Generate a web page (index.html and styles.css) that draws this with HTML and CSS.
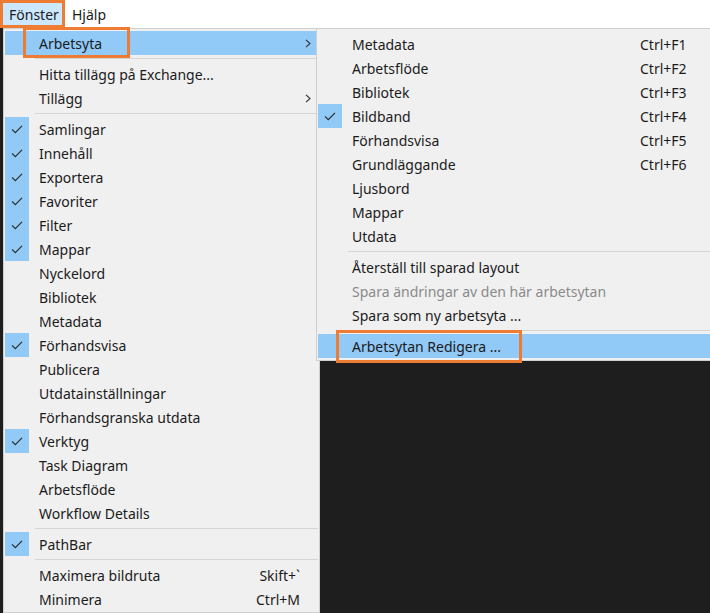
FILE: index.html
```html
<!DOCTYPE html>
<html lang="sv">
<head>
<meta charset="utf-8">
<title>Fönster</title>
<link rel="stylesheet" href="styles.css">
</head>
<body>
<div class="menubar">
  <div class="top-item active">Fönster</div>
  <div class="top-item">Hjälp</div>
</div>
<div class="workspace">
  <div class="strip"></div>
  <div class="menu main">
    <div class="row hl"><span class="chk"></span><span class="lbl"><span class="mark mark-a">Arbetsyta</span></span><span class="sc"></span><span class="arr"><svg width="6" height="9" viewBox="0 0 6 9"><path d="M1 .8 L5 4.5 L1 8.2" fill="none" stroke="#333" stroke-width="1.1"/></svg></span></div>
    <div class="sep"></div>
    <div class="row"><span class="chk"></span><span class="lbl">Hitta tillägg på Exchange...</span><span class="sc"></span><span class="arr"></span></div>
    <div class="row"><span class="chk"></span><span class="lbl">Tillägg</span><span class="sc"></span><span class="arr"><svg width="6" height="9" viewBox="0 0 6 9"><path d="M1 .8 L5 4.5 L1 8.2" fill="none" stroke="#333" stroke-width="1.1"/></svg></span></div>
    <div class="sep"></div>
    <div class="row"><span class="chk on"><svg width="24" height="24" viewBox="0 0 24 24"><path d="M7 12.3 L10.3 15.6 L17 8.9" fill="none" stroke="#2b2b2b" stroke-width="1.2"/></svg></span><span class="lbl">Samlingar</span><span class="sc"></span><span class="arr"></span></div>
    <div class="row"><span class="chk on"><svg width="24" height="24" viewBox="0 0 24 24"><path d="M7 12.3 L10.3 15.6 L17 8.9" fill="none" stroke="#2b2b2b" stroke-width="1.2"/></svg></span><span class="lbl">Innehåll</span><span class="sc"></span><span class="arr"></span></div>
    <div class="row"><span class="chk on"><svg width="24" height="24" viewBox="0 0 24 24"><path d="M7 12.3 L10.3 15.6 L17 8.9" fill="none" stroke="#2b2b2b" stroke-width="1.2"/></svg></span><span class="lbl">Exportera</span><span class="sc"></span><span class="arr"></span></div>
    <div class="row"><span class="chk on"><svg width="24" height="24" viewBox="0 0 24 24"><path d="M7 12.3 L10.3 15.6 L17 8.9" fill="none" stroke="#2b2b2b" stroke-width="1.2"/></svg></span><span class="lbl">Favoriter</span><span class="sc"></span><span class="arr"></span></div>
    <div class="row"><span class="chk on"><svg width="24" height="24" viewBox="0 0 24 24"><path d="M7 12.3 L10.3 15.6 L17 8.9" fill="none" stroke="#2b2b2b" stroke-width="1.2"/></svg></span><span class="lbl">Filter</span><span class="sc"></span><span class="arr"></span></div>
    <div class="row"><span class="chk on"><svg width="24" height="24" viewBox="0 0 24 24"><path d="M7 12.3 L10.3 15.6 L17 8.9" fill="none" stroke="#2b2b2b" stroke-width="1.2"/></svg></span><span class="lbl">Mappar</span><span class="sc"></span><span class="arr"></span></div>
    <div class="row"><span class="chk"></span><span class="lbl">Nyckelord</span><span class="sc"></span><span class="arr"></span></div>
    <div class="row"><span class="chk"></span><span class="lbl">Bibliotek</span><span class="sc"></span><span class="arr"></span></div>
    <div class="row"><span class="chk"></span><span class="lbl">Metadata</span><span class="sc"></span><span class="arr"></span></div>
    <div class="row"><span class="chk on"><svg width="24" height="24" viewBox="0 0 24 24"><path d="M7 12.3 L10.3 15.6 L17 8.9" fill="none" stroke="#2b2b2b" stroke-width="1.2"/></svg></span><span class="lbl">Förhandsvisa</span><span class="sc"></span><span class="arr"></span></div>
    <div class="row"><span class="chk"></span><span class="lbl">Publicera</span><span class="sc"></span><span class="arr"></span></div>
    <div class="row"><span class="chk"></span><span class="lbl">Utdatainställningar</span><span class="sc"></span><span class="arr"></span></div>
    <div class="row"><span class="chk"></span><span class="lbl">Förhandsgranska utdata</span><span class="sc"></span><span class="arr"></span></div>
    <div class="row"><span class="chk on"><svg width="24" height="24" viewBox="0 0 24 24"><path d="M7 12.3 L10.3 15.6 L17 8.9" fill="none" stroke="#2b2b2b" stroke-width="1.2"/></svg></span><span class="lbl">Verktyg</span><span class="sc"></span><span class="arr"></span></div>
    <div class="row"><span class="chk"></span><span class="lbl">Task Diagram</span><span class="sc"></span><span class="arr"></span></div>
    <div class="row"><span class="chk"></span><span class="lbl">Arbetsflöde</span><span class="sc"></span><span class="arr"></span></div>
    <div class="row"><span class="chk"></span><span class="lbl">Workflow Details</span><span class="sc"></span><span class="arr"></span></div>
    <div class="sep"></div>
    <div class="row"><span class="chk on"><svg width="24" height="24" viewBox="0 0 24 24"><path d="M7 12.3 L10.3 15.6 L17 8.9" fill="none" stroke="#2b2b2b" stroke-width="1.2"/></svg></span><span class="lbl">PathBar</span><span class="sc"></span><span class="arr"></span></div>
    <div class="sep"></div>
    <div class="row"><span class="chk"></span><span class="lbl">Maximera bildruta</span><span class="sc">Skift+`</span><span class="arr"></span></div>
    <div class="row"><span class="chk"></span><span class="lbl">Minimera</span><span class="sc">Ctrl+M</span><span class="arr"></span></div>
  </div>
  <div class="fill"></div>

  <div class="menu sub">
    <div class="row"><span class="chk"></span><span class="lbl">Metadata</span><span class="sc">Ctrl+F1</span></div>
    <div class="row"><span class="chk"></span><span class="lbl">Arbetsflöde</span><span class="sc">Ctrl+F2</span></div>
    <div class="row"><span class="chk"></span><span class="lbl">Bibliotek</span><span class="sc">Ctrl+F3</span></div>
    <div class="row"><span class="chk on"><svg width="24" height="24" viewBox="0 0 24 24"><path d="M7 12.3 L10.3 15.6 L17 8.9" fill="none" stroke="#2b2b2b" stroke-width="1.2"/></svg></span><span class="lbl">Bildband</span><span class="sc">Ctrl+F4</span></div>
    <div class="row"><span class="chk"></span><span class="lbl">Förhandsvisa</span><span class="sc">Ctrl+F5</span></div>
    <div class="row"><span class="chk"></span><span class="lbl">Grundläggande</span><span class="sc">Ctrl+F6</span></div>
    <div class="row"><span class="chk"></span><span class="lbl">Ljusbord</span><span class="sc"></span></div>
    <div class="row"><span class="chk"></span><span class="lbl">Mappar</span><span class="sc"></span></div>
    <div class="row"><span class="chk"></span><span class="lbl">Utdata</span><span class="sc"></span></div>
    <div class="sep"></div>
    <div class="row"><span class="chk"></span><span class="lbl">Återställ till sparad layout</span><span class="sc"></span></div>
    <div class="row disabled"><span class="chk"></span><span class="lbl">Spara ändringar av den här arbetsytan</span><span class="sc"></span></div>
    <div class="row"><span class="chk"></span><span class="lbl">Spara som ny arbetsyta ...</span><span class="sc"></span></div>
    <div class="sep"></div>
    <div class="row hl"><span class="chk"></span><span class="lbl"><span class="mark mark-b">Arbetsytan Redigera ...</span></span><span class="sc"></span></div>
  </div>
</div>
</body>
</html>
```

FILE: styles.css
```css
* { box-sizing: border-box; }
html, body {
  margin: 0;
  padding: 0;
  width: 710px;
  height: 613px;
  overflow: hidden;
  background: #1e1e1e;
  font-family: "Noto Sans", "Open Sans", "DejaVu Sans", sans-serif;
  font-size: 14px;
  color: #1b1b1b;
}
.menubar {
  height: 28px;
  background: #ffffff;
  display: flex;
  align-items: stretch;
}
.top-item {
  display: flex;
  align-items: center;
  padding: 2px 6px 0;
  line-height: 1;
}
.top-item.active {
  width: 65px;
  padding-left: 6px;
  background: #cce8ff;
  border: 3px solid #ee7d33;
}
.top-item + .top-item { padding-left: 7px; }

.workspace {
  position: relative;
  display: flex;
  align-items: flex-start;
  height: 585px;
}
.strip { width: 3px; align-self: stretch; }
.fill { flex: 1; }

.menu {
  background: #f0f0f0;
  border: 1px solid #cfcfcf;
}
.main {
  width: 317px;
  height: 585px;
  padding: 2px 1px;
}
.sub {
  position: absolute;
  left: 316px;
  top: 0;
  width: 420px;
  padding: 3px 1px 2px;
}
.row {
  height: 24px;
  display: flex;
  align-items: center;
  white-space: nowrap;
}
.chk {
  width: 24px;
  height: 24px;
  flex: none;
  display: flex;
}
.chk.on { background: #91c9f7; }
.lbl {
  flex: 1;
  padding-left: 10px;
  position: relative;
}
.main .sc {
  width: 70px;
  text-align: right;
}
.arr {
  width: 18px;
  display: flex;
  justify-content: flex-end;
  padding-right: 7px;
  padding-top: 1px;
}
.sub .lbl {
  flex: none;
  width: 298px;
}
.sub .sc {
  flex: 1;
  text-align: left;
}
.row.hl { background: #91c9f7; }
.row.disabled { color: #8a8a8a; }

.sep {
  height: 7px;
  position: relative;
}
.sep::after {
  content: "";
  position: absolute;
  left: 30px;
  right: 0;
  top: 3px;
  height: 1px;
  background: #d5d5d5;
}

.mark { position: relative; }
.mark::after {
  content: "";
  position: absolute;
  border: 3px solid #ee7d33;
  pointer-events: none;
}
.mark-a::after {
  left: -16px;
  right: -28px;
  top: -7px;
  bottom: -5px;
}
.mark-b::after {
  left: -16px;
  right: -21px;
  top: -7px;
  bottom: -7px;
}
```
